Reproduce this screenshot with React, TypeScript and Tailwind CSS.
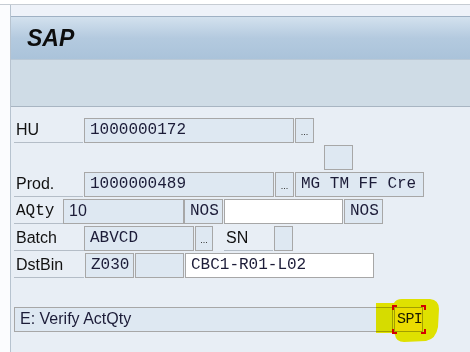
import React from "react";

const sans = { fontFamily: '"Liberation Sans", Arial, sans-serif' };
const mono = { fontFamily: '"Liberation Mono", "Courier New", monospace' };

function Label({ w, children, m }: { w: string; children?: React.ReactNode; m?: boolean }) {
  return (
    <div
      className={`${w} h-[25px] shrink-0 border-b border-[#b4bdc7] flex items-center pl-[2px] text-[16px] text-[#111] leading-none`}
      style={m ? mono : sans}
    >
      {children}
    </div>
  );
}

function Field({
  w,
  children,
  white,
  sansText,
  cls = "",
}: {
  w: string;
  children?: React.ReactNode;
  white?: boolean;
  sansText?: boolean;
  cls?: string;
}) {
  return (
    <div
      className={`${w} h-[25px] shrink-0 border border-[#a7a7a7] flex items-center px-[5px] pb-[1px] text-[16px] text-[#1c1c38] leading-none whitespace-pre overflow-hidden ${
        white ? "bg-white" : "bg-[#dee8f2]"
      } ${cls}`}
      style={sansText ? sans : mono}
    >
      {children}
    </div>
  );
}

function Dots({ w }: { w: string }) {
  return (
    <div
      className={`${w} h-[25px] shrink-0 border border-[#a7a7a7] bg-[#dee8f2] flex items-end justify-center pb-[5px] text-[9px] text-[#222] leading-none`}
      style={sans}
    >
      ...
    </div>
  );
}

export default function App() {
  return (
    <div className="w-[470px] h-[352px] bg-white overflow-hidden flex flex-col relative">
      <div className="h-[4px] bg-white shrink-0" />
      <div className="h-[1px] bg-[#c6ccd3] shrink-0" />
      <div className="flex flex-1 min-h-0">
        <div className="w-[10px] bg-[#fbfcfe] shrink-0" />
        <div className="flex-1 flex flex-col border-l border-[#b7c3cf]">
          <div className="h-[11px] bg-[#eef2f9] shrink-0" />
          <div className="h-[44px] shrink-0 border-t border-b border-t-[#9fb1c4] border-b-[#b9c8d6] bg-gradient-to-b from-[#d3e1ee] via-[#b4cadf] to-[#aac3da] flex items-center pl-[16px]">
            <span className="text-[23px] font-bold italic text-[#0d0d0d] leading-none" style={sans}>
              SAP
            </span>
          </div>
          <div className="h-[47px] shrink-0 bg-[#cfdce6] border-b border-[#a8b5c2]" />
          <div className="flex-1 bg-[#e8eef5] pl-[3px] pt-[11px] flex flex-col gap-[2px]">
            {/* HU */}
            <div className="flex gap-[1px]">
              <Label w="w-[69px]">HU</Label>
              <Field w="w-[210px]">1000000172</Field>
              <Dots w="w-[19px]" />
            </div>
            {/* small box */}
            <div className="flex">
              <div className="w-[310px] shrink-0" />
              <Field w="w-[29px]" />
            </div>
            {/* Prod */}
            <div className="flex gap-[1px]">
              <Label w="w-[69px]">Prod.</Label>
              <Field w="w-[190px]">1000000489</Field>
              <Dots w="w-[19px]" />
              <Field w="w-[129px]">MG TM FF Cre</Field>
            </div>
            {/* AQty */}
            <div className="flex">
              <Label w="w-[49px]" m>
                AQty
              </Label>
              <Field w="w-[121px]" sansText>
                10
              </Field>
              <Field w="w-[39px]" cls="px-[3px]">
                NOS
              </Field>
              <Field w="w-[119px]" white cls="ml-[1px]" />
              <Field w="w-[39px]" cls="ml-[1px] px-[3px]">
                NOS
              </Field>
            </div>
            {/* Batch */}
            <div className="flex">
              <Label w="w-[70px]">Batch</Label>
              <Field w="w-[110px]">ABVCD</Field>
              <div className="ml-[1px]">
                <Dots w="w-[18px]" />
              </div>
              <div className="ml-[11px]">
                <Label w="w-[49px]">SN</Label>
              </div>
              <div className="ml-[1px]">
                <Field w="w-[19px]" />
              </div>
            </div>
            {/* DstBin */}
            <div className="flex gap-[1px]">
              <Label w="w-[70px]">DstBin</Label>
              <Field w="w-[49px]">Z030</Field>
              <Field w="w-[49px]" />
              <Field w="w-[189px]" white>
                CBC1-R01-L02
              </Field>
            </div>
            {/* Message */}
            <div className="flex gap-[1px] mt-[27px]">
              <Field w="w-[379px]" sansText cls="px-[3px]">
                E: Verify ActQty
              </Field>
              <Field w="w-[29px]" cls="!pl-[2px] !pr-0 !text-[15px] tracking-[-0.6px] bg-[#f4e800] border-[#9c9a40]">
                SPI
              </Field>
            </div>
          </div>
        </div>
      </div>

      {/* highlighter overlay */}
      <svg
        className="absolute left-[374px] top-[297px] mix-blend-multiply pointer-events-none"
        width="68"
        height="48"
        viewBox="0 0 68 48"
      >
        <path
          d="M2 6 L20 6 Q22 2 28 2 L56 2 Q65 3 65 12 L64 30 Q62 42 52 44 L30 45 Q22 45 21 38 L20 36 L2 36 Z"
          fill="#f6f200"
        />
      </svg>
      {/* red focus brackets */}
      <div className="absolute left-[392px] top-[305px] w-[34px] h-[29px] pointer-events-none">
        <div className="absolute left-0 top-0 w-[5px] h-[5px] border-l-2 border-t-2 border-[#d40000]" />
        <div className="absolute right-0 top-0 w-[5px] h-[5px] border-r-2 border-t-2 border-[#d40000]" />
        <div className="absolute left-0 bottom-0 w-[5px] h-[5px] border-l-2 border-b-2 border-[#d40000]" />
        <div className="absolute right-0 bottom-0 w-[5px] h-[5px] border-r-2 border-b-2 border-[#d40000]" />
      </div>
    </div>
  );
}
